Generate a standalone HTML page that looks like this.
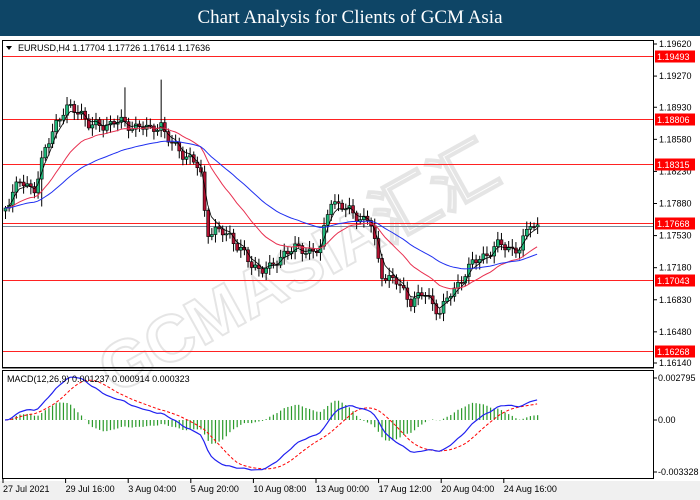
<!DOCTYPE html>
<html><head><meta charset="utf-8"><style>
body{margin:0;width:700px;height:500px;background:#fff;overflow:hidden;font-family:"Liberation Sans",Tahoma,sans-serif}
#t{position:absolute;left:0;top:0;width:700px;height:36px;background:#0e4566;color:#fff;font-family:"Liberation Serif",serif;font-size:19px;text-align:center;line-height:36px}
svg{position:absolute;left:0;top:0}
</style></head><body>
<div id="t">Chart Analysis for Clients of GCM Asia</div>
<svg id="s" width="700" height="500" font-family="Liberation Sans, sans-serif" font-size="9">
<rect x="0" y="36" width="700" height="464" fill="#fff"/>
<rect x="0" y="481" width="700" height="19" fill="#f0f0f0"/>
<g id="g"></g>
<rect x="2.5" y="40.5" width="651" height="327" fill="none" stroke="#000"/>
<rect x="2.5" y="370.5" width="651" height="108" fill="none" stroke="#000"/>
<line x1="2" y1="368.5" x2="654" y2="368.5" stroke="#888"/>
<text x="18" y="51" font-size="9">EURUSD,H4  1.17704 1.17726 1.17614 1.17636</text>
<path d="M6 46h6l-3 4z" fill="#000"/>
<text x="7" y="382" font-size="9">MACD(12,26,9) 0.001237 0.000914 0.000323</text>
</svg>
<script>
var s=document.getElementById('g'),h='';
function Y(p){return 44+(1.1962-p)*9167}
h+='<text x="0" y="0" transform="translate(115,395) rotate(-29)" font-size="66" font-weight="bold" fill="none" stroke="#ccc" stroke-width="2" opacity="0.5">GCMASIA汇汇</text>';
var ax=[1.1962,1.1927,1.1893,1.1858,1.1823,1.1788,1.1753,1.1718,1.1683,1.1648,1.1614];
ax.forEach(function(p){var y=Y(p);h+='<line x1="654" y1="'+y+'" x2="657" y2="'+y+'" stroke="#000"/><text x="659" y="'+(y+3)+'">'+p.toFixed(5)+'</text>'});
var rl=[1.19493,1.18806,1.18315,1.17668,1.17043,1.16268];
h+='<line x1="3" y1="226.5" x2="653" y2="226.5" stroke="#789"/>';
rl.forEach(function(p){var y=Math.round(Y(p))+.5;h+='<line x1="3" y1="'+y+'" x2="653" y2="'+y+'" stroke="#f22"/><rect x="655" y="'+(y-6)+'" width="40" height="12" fill="#f00"/><text x="657" y="'+(y+3.5)+'" fill="#fff">'+p.toFixed(5)+'</text>'});
var kp=[[5,205],[20,182],[35,188],[45,150],[55,122],[65,110],[80,110],[90,128],[100,125],[115,122],[130,125],[150,130],[160,122],[166,140],[180,150],[200,170],[206,230],[230,235],[250,265],[270,270],[285,250],[320,250],[330,198],[345,210],[370,222],[380,272],[395,282],[410,300],[425,295],[440,312],[450,295],[465,272],[480,257],[500,245],[520,250],[530,222],[536,226]];
var N=148,cl=[];
for(var i=0;i<N;i++){var x=5+i*3.62,j=0;while(j<kp.length-2&&kp[j+1][0]<x)j++;var a=kp[j],b=kp[j+1],t=Math.min(1,Math.max(0,(x-a[0])/(b[0]-a[0])));cl.push({x:x,y:a[1]+(b[1]-a[1])*t+Math.sin(i*1.7)*4+Math.cos(i*0.9)*3})}
var prev=cl[0].y+3;
cl.forEach(function(c,i){var o=prev,cc=c.y,hi=Math.min(o,cc)-2-Math.abs(Math.sin(i*2.3))*6,lo=Math.max(o,cc)+2+Math.abs(Math.cos(i*1.3))*6;
if(i==43)hi-=35;if(i==10)lo+=20;if(i==33)hi-=25;
var up=cc<o;h+='<line x1="'+(c.x+.5)+'" y1="'+hi+'" x2="'+(c.x+.5)+'" y2="'+lo+'" stroke="#000"/><rect x="'+(c.x-1)+'" y="'+Math.min(o,cc)+'" width="3" height="'+Math.max(1,Math.abs(o-cc))+'" fill="'+(up?'#1fb87a':'#b01030')+'" stroke="#000" stroke-width=".6"/>';prev=cc});
function ema(arr,n){var k=2/(n+1),r=[],e=arr[0];arr.forEach(function(v){e=v*k+e*(1-k);r.push(e)});return r}
function sma(arr,n){return arr.map(function(v,i){var s=0,c=0;for(var k=Math.max(0,i-n+1);k<=i;k++){s+=arr[k];c++}return s/c})}
var ys=cl.map(function(c){return c.y});
function line(a,col,w,dash){var d='';a.forEach(function(v,i){d+=(i?'L':'M')+cl[i].x.toFixed(1)+' '+v.toFixed(1)});h+='<path d="'+d+'" fill="none" stroke="'+col+'" stroke-width="'+(w||1)+'"'+(dash?' stroke-dasharray="'+dash+'"':'')+'/>'}
line(ema(ys,4),'#000',.8);line(ema(ys,20),'#e83050',1);line(ema(ys,45),'#2030f0',1);
var e12=ema(ys,12),e26=ema(ys,26),m=e12.map(function(v,i){return -(v-e26[i])}),sg=sma(m,9);
var mx=0;m.forEach(function(v){mx=Math.max(mx,Math.abs(v))});var sc=50/mx;
var z=420;
m.forEach(function(v,i){var hv=(v-sg[i])*sc*1.2;h+='<line x1="'+(cl[i].x+.5)+'" y1="'+z+'" x2="'+(cl[i].x+.5)+'" y2="'+(z-hv)+'" stroke="#2a9a2a" stroke-width="1.2"/>'});
var mm=m.map(function(v){return z-v*sc}),ss=sg.map(function(v){return z-v*sc});
line(ss,'#f00',1,'3,2');line(mm,'#2020f0',1.2);
[[0.002795,378],[0,420],[-0.003328,472]].forEach(function(a){h+='<line x1="654" y1="'+a[1]+'" x2="657" y2="'+a[1]+'" stroke="#000"/><text x="658" y="'+(a[1]+3)+'">'+(a[0]==0?'0.00':a[0].toFixed(6))+'</text>'});
var dl=['27 Jul 2021','29 Jul 16:00','3 Aug 04:00','5 Aug 20:00','10 Aug 08:00','13 Aug 00:00','17 Aug 12:00','20 Aug 04:00','24 Aug 16:00'];
dl.forEach(function(t,i){var x=3+i*62.6;h+='<line x1="'+x+'" y1="479" x2="'+x+'" y2="483" stroke="#000"/><text x="'+(x)+'" y="492">'+t+'</text>'});
s.innerHTML=h;
</script>
</body></html>
